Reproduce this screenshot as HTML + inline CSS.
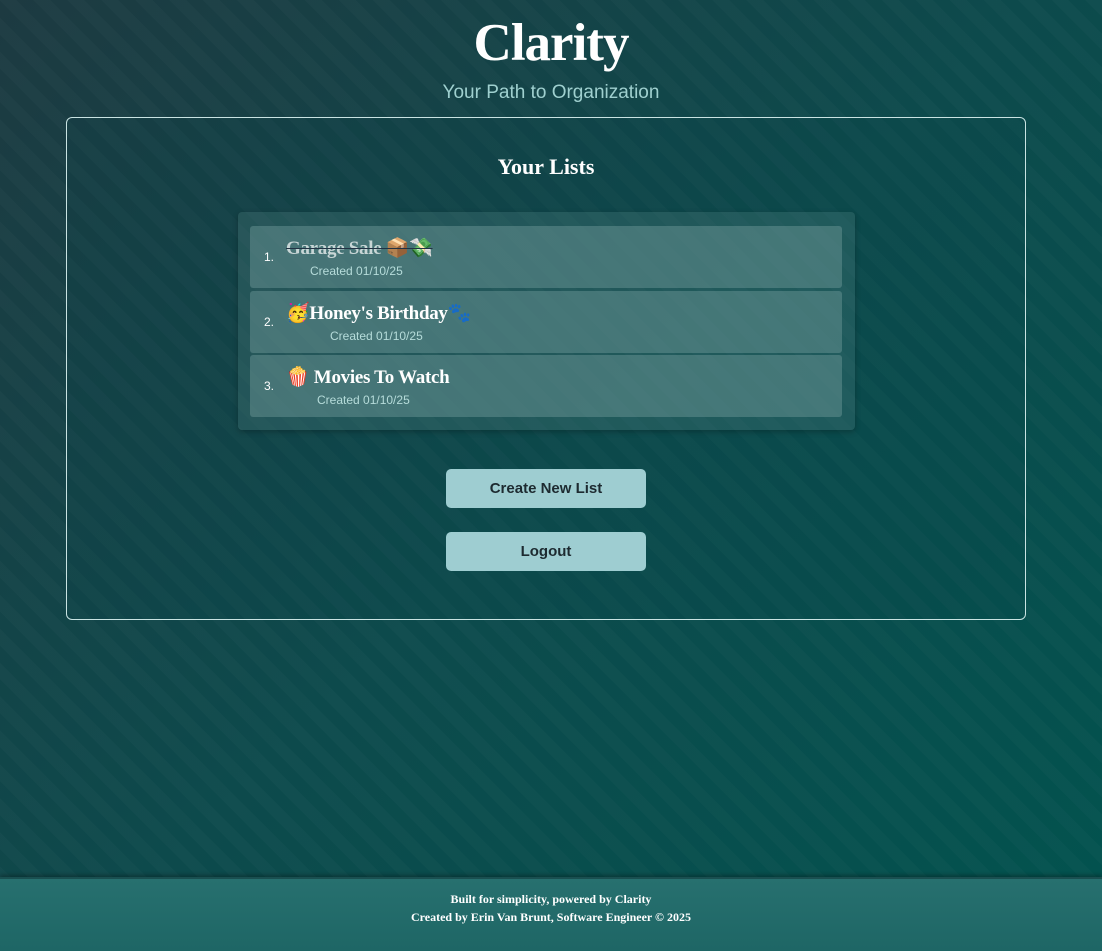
<!DOCTYPE html>
<html><head><meta charset="utf-8"><style>
*{box-sizing:border-box;margin:0;padding:0}
html,body{width:1102px;height:951px;overflow:hidden}
body{position:relative;font-family:"Liberation Sans",sans-serif;color:#fff;
background:
repeating-linear-gradient(45deg,rgba(255,255,255,0.018) 0 12px,rgba(0,0,0,0) 12px 24px),
linear-gradient(135deg,#1d3a41 0%,#0d4a4c 50%,#02534f 100%);}
h1{position:absolute;top:13px;left:0;width:1102px;text-align:center;font-family:"Liberation Serif",serif;font-weight:700;font-size:53px;letter-spacing:-1px}
.sub{position:absolute;top:82px;left:0;width:1102px;text-align:center;font-size:19px;color:#9fd0cf}
.card{position:absolute;left:66px;top:117px;width:960px;height:503px;border:1px solid #c9e3e2;border-radius:6px;background:rgba(10,70,72,0.15)}
h2{position:absolute;top:36px;width:100%;text-align:center;font-family:"Liberation Serif",serif;font-size:22px;font-weight:700}
.lists{position:absolute;left:171px;top:94px;width:617px;height:218px;background:rgba(80,130,130,0.3);border-radius:4px;box-shadow:0 2px 6px rgba(0,0,0,0.25)}
.item{position:absolute;left:12px;width:592px;height:62px;background:rgba(120,160,160,0.42);border-radius:3px}
.num{position:absolute;left:14px;top:24px;font-size:12px}
.t{position:absolute;left:36px;top:10px;font-family:"Liberation Serif",serif;font-weight:700;font-size:19px;white-space:nowrap;letter-spacing:-0.3px}
.d{position:absolute;top:38px;font-size:12px;color:#b6dcda}
.btn{position:absolute;left:379px;width:200px;height:39px;background:#9ecdd1;border-radius:5px;color:#1d2a30;font-weight:700;font-size:15px;text-align:center;line-height:39px}
footer{position:absolute;left:0;top:877px;width:1102px;height:74px;background:linear-gradient(180deg,#27706f,#1e6665);border-top:2px solid #1a4f50;box-shadow:0 -2px 4px rgba(0,0,0,0.3);text-align:center;font-family:"Liberation Serif",serif;font-weight:700;font-size:12px;line-height:18px;padding-top:11px}
</style></head><body>
<h1>Clarity</h1>
<div class="sub">Your Path to Organization</div>
<div class="card">
<h2>Your Lists</h2>
<div class="lists">
<div class="item" style="top:14px"><span class="num">1.</span><span class="t" style="color:#c8d6d6;text-decoration:line-through;text-decoration-color:#234">Garage Sale 📦💸</span><span class="d" style="left:60px">Created 01/10/25</span></div>
<div class="item" style="top:79px"><span class="num">2.</span><span class="t">🥳Honey's Birthday🐾</span><span class="d" style="left:80px">Created 01/10/25</span></div>
<div class="item" style="top:143px"><span class="num">3.</span><span class="t">🍿 Movies To Watch</span><span class="d" style="left:67px">Created 01/10/25</span></div>
</div>
<div class="btn" style="top:351px">Create New List</div>
<div class="btn" style="top:414px">Logout</div>
</div>
<footer>Built for simplicity, powered by Clarity<br>Created by Erin Van Brunt, Software Engineer © 2025</footer>
</body></html>
